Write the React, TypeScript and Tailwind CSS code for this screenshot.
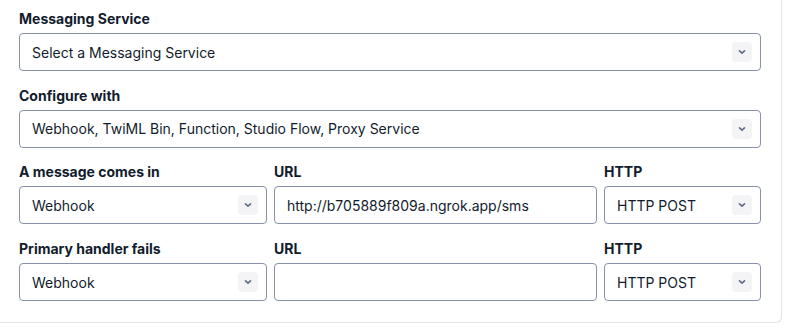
import React from "react";

function Chevron() {
  return (
    <span className="flex h-5 w-5 items-center justify-center rounded bg-[#f4f4f6]">
      <svg width="10" height="10" viewBox="0 0 10 10" fill="none">
        <path d="M2.5 3.8 5 6.2l2.5-2.4" stroke="#606b85" strokeWidth="1.6" strokeLinecap="round" strokeLinejoin="round" />
      </svg>
    </span>
  );
}

function Select({ value }: { value: string }) {
  return (
    <div className="flex h-[38px] items-center justify-between rounded border border-[#8891aa] bg-white pl-[12px] pr-[8px] text-[14px] text-[#121c2d]">
      <span className="truncate">{value}</span>
      <Chevron />
    </div>
  );
}

function Input({ value }: { value?: string }) {
  return (
    <div className="flex h-[38px] items-center rounded border border-[#8891aa] bg-white px-[12px] text-[14px] text-[#121c2d]">
      {value}
    </div>
  );
}

function Label({ children }: { children: React.ReactNode }) {
  return <div className="mb-1 h-5 text-[14px] font-bold leading-5 text-[#121c2d]">{children}</div>;
}

export default function App() {
  return (
    <div className="h-[335px] w-[800px] bg-white" style={{ fontFamily: "Inter, 'Noto Sans', sans-serif" }}>
      <div className="flex w-[782px] flex-col gap-y-[14.7px] rounded-br-md border-r border-b border-[#e1e3ea] pt-[9px] pr-5 pb-[21px] pl-[19px]">
        <div>
          <Label>Messaging Service</Label>
          <Select value="Select a Messaging Service" />
        </div>
        <div>
          <Label>Configure with</Label>
          <Select value="Webhook, TwiML Bin, Function, Studio Flow, Proxy Service" />
        </div>
        <div className="grid grid-cols-[248px_323px_1fr] gap-x-[7px]">
          <div>
            <Label>A message comes in</Label>
            <Select value="Webhook" />
          </div>
          <div>
            <Label>URL</Label>
            <Input value="http://b705889f809a.ngrok.app/sms" />
          </div>
          <div>
            <Label>HTTP</Label>
            <Select value="HTTP POST" />
          </div>
        </div>
        <div className="grid grid-cols-[248px_323px_1fr] gap-x-[7px]">
          <div>
            <Label>Primary handler fails</Label>
            <Select value="Webhook" />
          </div>
          <div>
            <Label>URL</Label>
            <Input />
          </div>
          <div>
            <Label>HTTP</Label>
            <Select value="HTTP POST" />
          </div>
        </div>
      </div>
    </div>
  );
}
